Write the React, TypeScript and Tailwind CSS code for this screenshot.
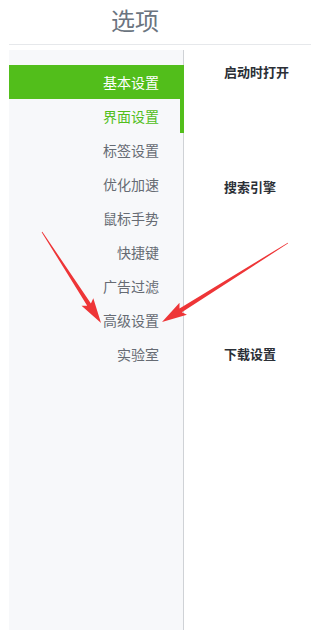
import React from 'react';

const font = { fontFamily: '"Noto Sans CJK SC", "Noto Sans", sans-serif' };

const items = ['基本设置', '界面设置', '标签设置', '优化加速', '鼠标手势', '快捷键', '广告过滤', '高级设置', '实验室'];

function Arrow({ x, y, len, angle }: { x: number; y: number; len: number; angle: number }) {
  const h = 22;
  return (
    <polygon
      transform={`translate(${x} ${y}) rotate(${angle})`}
      points={`0,-0.4 ${len - h},-2.2 ${len - h - 3},-7 ${len},0 ${len - h - 3},7 ${len - h},2.2 0,0.4`}
      fill="#ee3537"
    />
  );
}

export default function App() {
  return (
    <div className="relative w-[311px] h-[630px] bg-white overflow-hidden flex flex-col" style={font}>
      <header className="h-[45px] ml-[9px] border-b border-[#e6e8eb] flex items-center">
        <h1 className="w-[252px] text-center text-[24px] leading-none text-[#6b7480] pb-[4px]">选项</h1>
      </header>

      <div className="flex-1 flex ml-[9px] pt-[5px]">
        <nav className="w-[175px] bg-[#f7f8fa] border-r border-[#cfd2d6] pt-[15px] flex flex-col">
          {items.map((label, i) => (
            <div
              key={label}
              className={
                i === 0
                  ? 'mr-[-1px] h-[34px] leading-[34px] text-right pr-[25px] text-[14px] bg-[#52be1b] text-white'
                  : i === 1
                  ? 'mr-[-1px] h-[34px] leading-[34px] text-right pr-[25px] text-[14px] text-[#52be1b] shadow-[inset_-4px_0_0_#52be1b]'
                  : 'mr-[-1px] h-[34px] leading-[34px] text-right pr-[25px] text-[14px] text-[#666b73]'
              }
            >
              {label}
            </div>
          ))}
        </nav>

        <main className="flex-1 pl-[40px] pt-[12px] flex flex-col">
          <h2 className="text-[13px] leading-[20px] font-bold text-[#2b2f36]">启动时打开</h2>
          <h2 className="mt-[95px] text-[13px] leading-[20px] font-bold text-[#2b2f36]">搜索引擎</h2>
          <h2 className="mt-[147px] text-[13px] leading-[20px] font-bold text-[#2b2f36]">下载设置</h2>
        </main>
      </div>

      <svg className="absolute inset-0 pointer-events-none" width="311" height="630" viewBox="0 0 311 630">
        <Arrow x={42} y={232} len={108.5} angle={57.04} />
        <Arrow x={288} y={243} len={148.7} angle={147.9} />
      </svg>
    </div>
  );
}
